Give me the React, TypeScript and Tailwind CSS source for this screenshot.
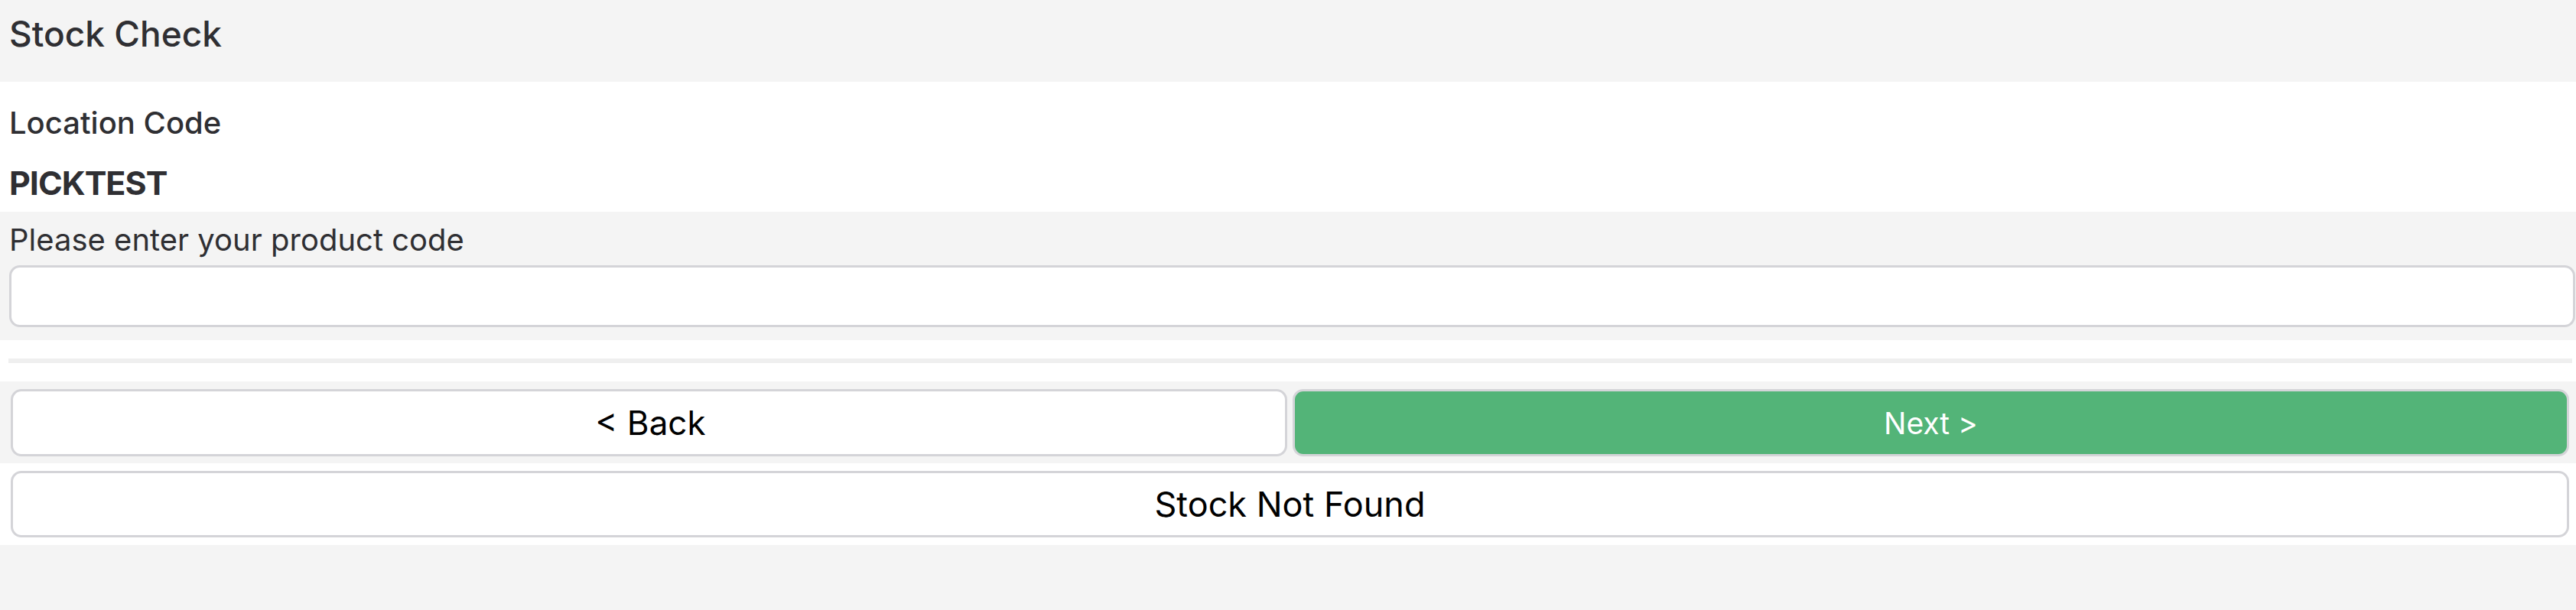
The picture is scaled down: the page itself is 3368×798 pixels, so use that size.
import { useState } from "react";

export default function App() {
    const [productCode, setProductCode] = useState("");

    return (
        <div className="min-h-screen bg-[#f4f4f4] text-[#2f2f33] font-['Inter','Noto_Sans',sans-serif]">
            {/* Header */}
            <div className="h-[107px] bg-[#f4f4f4] px-[12px] pt-[14px]">
                <h1 className="text-[46px] font-medium leading-[60px]">Stock Check</h1>
            </div>

            {/* Location */}
            <div className="h-[170px] bg-white px-[12px] pt-[26px]">
                <div className="text-[40px] font-medium leading-[56px]">Location Code</div>
                <div className="mt-[22px] text-[43px] font-bold leading-[56px] tracking-[-1px]">PICKTEST</div>
            </div>

            {/* Product code */}
            <div className="h-[168px] bg-[#f4f4f4] pl-[12px] pr-[1px] pt-[9px]">
                <label className="block text-[40px] leading-[56px]">Please enter your product code</label>
                <input
                    value={productCode}
                    onChange={(e) => setProductCode(e.target.value)}
                    className="mt-[5px] block h-[81px] w-full rounded-[14px] border-[3px] border-[#d4d4d8] bg-white px-4 text-[40px] outline-none"
                />
            </div>

            {/* Divider */}
            <div className="h-[54px] bg-white pl-[11px] pr-[5px] pt-[24px]">
                <div className="h-[6px] bg-[#efefef]"></div>
            </div>

            {/* Back / Next */}
            <div className="h-[107px] bg-[#f4f4f4] pl-[14px] pr-[9px] pt-[10px]">
                <div className="grid h-[88px] grid-cols-2 gap-[7px]">
                    <button className="rounded-[14px] border-[3px] border-[#d4d4d8] bg-white pl-[4px] text-[44px] leading-none text-black">
                        &lt; Back
                    </button>
                    <button className="rounded-[14px] border-[3px] border-[#d4d4d8] bg-[#53b478] text-[39px] leading-none text-white">
                        Next &gt;
                    </button>
                </div>
            </div>

            {/* Stock not found */}
            <div className="h-[107px] bg-white pl-[14px] pr-[9px] pt-[10px]">
                <button className="h-[87px] w-full rounded-[14px] border-[3px] border-[#d4d4d8] bg-white text-[45px] leading-none text-black">
                    Stock Not Found
                </button>
            </div>
        </div>
    );
}
